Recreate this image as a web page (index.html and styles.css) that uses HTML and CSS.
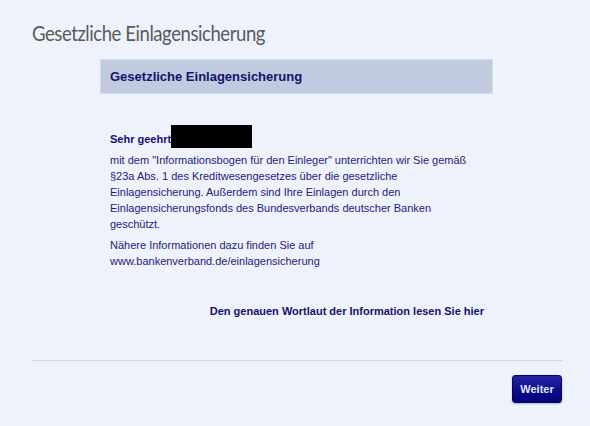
FILE: index.html
```html
<!DOCTYPE html>
<html lang="de">
<head>
<meta charset="utf-8">
<title>Gesetzliche Einlagensicherung</title>
<link rel="stylesheet" href="styles.css">
</head>
<body>
<header class="page-head">
  <h1 class="page-title">Gesetzliche Einlagensicherung</h1>
</header>
<main class="content">
  <div class="bar"><h2 class="bar-title">Gesetzliche Einlagensicherung</h2></div>
  <div class="text">
    <p class="greeting">Sehr geehrt<span class="redact"></span></p>
    <p class="para">mit dem "Informationsbogen für den Einleger" unterrichten wir Sie gemäß §23a Abs. 1 des Kreditwesengesetzes über die gesetzliche Einlagensicherung. Außerdem sind Ihre Einlagen durch den Einlagensicherungsfonds des Bundesverbands deutscher Banken geschützt.</p>
    <p class="para">Nähere Informationen dazu finden Sie auf www.bankenverband.de/einlagensicherung</p>
    <p class="more"><a class="more-link" href="#">Den genauen Wortlaut der Information lesen Sie hier</a></p>
  </div>
</main>
<footer class="foot">
  <button class="btn" type="button">Weiter</button>
</footer>
</body>
</html>
```
FILE: styles.css
```css
html, body {
  margin: 0;
  padding: 0;
  background: #eef2fa;
}
body {
  width: 590px;
  height: 426px;
  overflow: hidden;
  font-family: "Liberation Sans", Arial, sans-serif;
  color: #22227a;
}
.page-head {
  padding: 20px 0 0 32px;
}
.page-title {
  margin: 0;
  font-family: Lato, "Liberation Sans", sans-serif;
  font-weight: normal;
  font-size: 21px;
  line-height: 26px;
  letter-spacing: -0.5px;
  color: #5a5a5a;
  transform: scaleX(0.883);
  transform-origin: left center;
}
.content {
  margin: 13px 0 0 100px;
  width: 393px;
}
.bar {
  height: 35px;
  box-sizing: border-box;
  background: #c1cbdf;
  border: 1px solid #d3dbe9;
  display: flex;
  align-items: center;
  padding-left: 9px;
}
.bar-title {
  margin: 0;
  font-size: 13px;
  font-weight: bold;
  color: #12126e;
}
.text {
  padding: 0 9px 0 10px;
}
.greeting {
  margin: 31px 0 0;
  font-size: 11px;
  font-weight: bold;
  line-height: 16px;
  color: #12126e;
}
.redact {
  display: inline-block;
  width: 81px;
  height: 23px;
  background: #000;
  vertical-align: -5px;
}
.para {
  margin: 4px 0 0;
  font-size: 11px;
  line-height: 16px;
  width: 374px;
}
.para + .para {
  margin-top: 5px;
}
.more {
  margin: 34px 0 0;
  text-align: right;
  font-size: 11px;
  line-height: 16px;
}
.more-link {
  color: #12126e;
  font-weight: bold;
  text-decoration: none;
}
.foot {
  margin: 41px 28px 0 31px;
  border-top: 1px solid #d2d6df;
  display: flex;
  justify-content: flex-end;
  padding-top: 14px;
}
.btn {
  width: 50px;
  height: 28px;
  border: 1px solid #06065a;
  border-radius: 3px;
  background: linear-gradient(#2424a4, #0c0c8c 55%, #03037a);
  color: #e4e8f6;
  font-family: "Liberation Sans", Arial, sans-serif;
  font-weight: bold;
  font-size: 11px;
  padding: 0;
  box-shadow: 0 1px 2px rgba(0,0,0,0.25);
}
```
